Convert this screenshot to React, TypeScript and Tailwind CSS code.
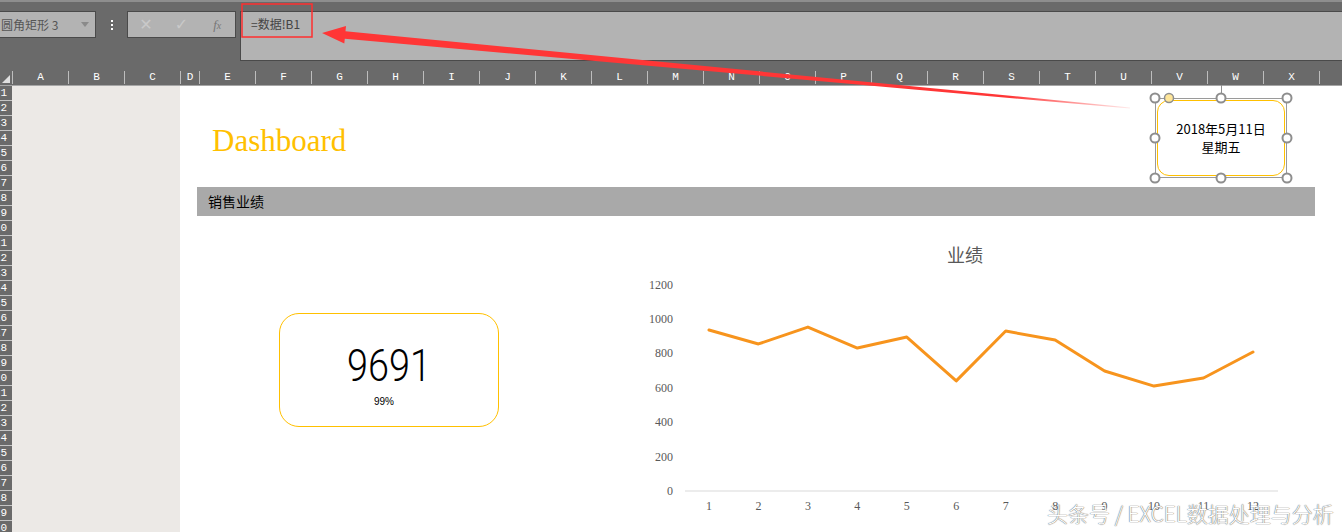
import React from 'react'

const cols: { l: string; w: number }[] = [
  { l: 'A', w: 56 },
  { l: 'B', w: 56 },
  { l: 'C', w: 56 },
  { l: 'D', w: 19 },
  ...'EFGHIJKLMNOPQRSTUVWXY'.split('').map((l) => ({ l, w: 56 })),
]

const sales = [936, 855, 953, 831, 895, 640, 930, 878, 698, 610, 657, 808]

function Toolbar() {
  return (
    <div className="h-[70px] bg-[#6a6a6a] border-t-2 border-[#8e8e8e] flex items-start pt-[9px] shrink-0">
      <div className="w-[96px] h-[27px] bg-[#b3b3b3] border border-[#4a4a4a] border-l-0 flex items-center justify-between pl-[1px] pr-[6px]">
        <span className="text-[12px] text-[#555] font-['Noto_Sans_CJK_SC',sans-serif]">圆角矩形 3</span>
        <span className="w-0 h-0 border-l-[4px] border-r-[4px] border-t-[5px] border-l-transparent border-r-transparent border-t-[#8a8a8a]" />
      </div>
      <div className="w-[31px] h-[27px] flex flex-col items-center justify-center gap-[2px]">
        <span className="w-[2px] h-[2px] bg-white" />
        <span className="w-[2px] h-[2px] bg-white" />
        <span className="w-[2px] h-[2px] bg-white" />
      </div>
      <div className="w-[109px] h-[27px] bg-[#b3b3b3] border border-[#4a4a4a] flex items-center">
        <span className="w-[36px] text-center text-[16px] text-[#c9c9c9] font-['DejaVu_Sans',sans-serif]">✕</span>
        <span className="w-[36px] text-center text-[16px] text-[#c9c9c9] font-['DejaVu_Sans',sans-serif]">✓</span>
        <span className="w-[36px] text-center text-[13px] italic text-[#777] font-['Liberation_Serif',serif]">
          f<span className="text-[10px]">x</span>
        </span>
      </div>
      <div className="ml-[4px] flex-1 h-[50px] bg-[#b3b3b3] border border-[#4a4a4a] border-r-0 pl-[10px] pt-[3px] text-[12px] leading-[18px] text-[#444] font-['Noto_Sans_CJK_SC',sans-serif]">
        =数据!B1
      </div>
    </div>
  )
}

function ColumnHeader() {
  return (
    <div className="h-[16px] bg-[#6a6a6a] flex border-b border-[#a6a6a6] shrink-0">
      <div className="w-[12px] shrink-0 relative">
        <span className="absolute left-[2px] bottom-[2px] w-0 h-0 border-b-[8px] border-l-[8px] border-b-[#e0e0e0] border-l-transparent" />
      </div>
      {cols.map((c) => (
        <div
          key={c.l}
          style={{ width: c.w }}
          className="shrink-0 flex items-end justify-center pb-[1px] border-l border-[#bdbdbd] my-[1px] text-[11px] leading-none text-white font-['Liberation_Mono',monospace]"
        >
          {c.l}
        </div>
      ))}
    </div>
  )
}

function RowHeader() {
  return (
    <div className="w-[12px] shrink-0 bg-[#6a6a6a] flex flex-col overflow-hidden">
      {Array.from({ length: 31 }, (_, i) => (
        <div
          key={i}
          className="h-[15px] shrink-0 border-b border-[#c4c4c4] flex items-center justify-end overflow-hidden pr-[5px] text-[11px] leading-none text-white font-['Liberation_Mono',monospace]"
        >
          <span className="whitespace-nowrap">{i + 1}</span>
        </div>
      ))}
    </div>
  )
}

function KpiCard() {
  return (
    <div className="ml-[99px] mt-[97px] w-[220px] h-[114px] border border-[#ffc000] rounded-[20px] flex flex-col items-center pt-[32px] shrink-0">
      <div className="text-[45px] leading-[40px] text-black font-['Roboto',sans-serif] font-light scale-x-[0.84]">
        9691
      </div>
      <div className="mt-[11px] ml-[-10px] text-[10px] leading-none text-black font-['Liberation_Sans',sans-serif]">99%</div>
    </div>
  )
}

function SalesChart() {
  const y = (v: number) => 255 - v * 0.172
  const x = (i: number) => 79 + i * 49.45
  const pts = sales.map((v, i) => `${x(i)},${y(v)}`).join(' ')
  return (
    <svg width="660" height="296" className="ml-[131px] mt-[20px] shrink-0 overflow-visible">
      <text x="335" y="26" textAnchor="middle" fontSize="18" fill="#595959" fontFamily="'Noto Sans CJK SC', sans-serif">
        业绩
      </text>
      {[0, 200, 400, 600, 800, 1000, 1200].map((v) => (
        <text key={v} x="43" y={y(v) + 4} textAnchor="end" fontSize="12" fill="#595959" fontFamily="'Liberation Serif', serif">
          {v}
        </text>
      ))}
      <line x1="55" y1="255" x2="648" y2="255" stroke="#d9d9d9" strokeWidth="1" />
      {sales.map((_, i) => (
        <text key={i} x={x(i)} y="274" textAnchor="middle" fontSize="12" fill="#595959" fontFamily="'Liberation Serif', serif">
          {i + 1}
        </text>
      ))}
      <polyline points={pts} fill="none" stroke="#f7941d" strokeWidth="3" strokeLinejoin="round" strokeLinecap="round" />
    </svg>
  )
}

function DateShape() {
  const handles = [
    [0, 0],
    [66, 0],
    [132, 0],
    [0, 40],
    [132, 40],
    [0, 80],
    [66, 80],
    [132, 80],
  ]
  return (
    <div className="absolute left-[1155px] top-[85px] w-[132px] h-[93px]">
      <div className="absolute left-[66px] top-0 w-px h-[13px] bg-[#8e8e8e]" />
      <div className="absolute left-0 top-[13px] w-[132px] h-[80px] border border-[#9a9a9a]">
        <div className="absolute inset-[1px] rounded-[12px] border border-[#ffc000] bg-white flex flex-col items-center justify-center text-[13px] leading-[18px] text-black font-['Noto_Sans_CJK_SC',sans-serif]">
          <span>2018年5月11日</span>
          <span>星期五</span>
        </div>
      </div>
      <svg className="absolute left-[-6px] top-[7px] overflow-visible" width="144" height="92">
        {handles.map(([hx, hy], i) => (
          <circle key={i} cx={hx + 6} cy={hy + 6} r="4.5" fill="white" stroke="#8e8e8e" strokeWidth="2" />
        ))}
        <circle cx="20" cy="6" r="4.5" fill="#ffe699" stroke="#8e8e8e" strokeWidth="1.5" />
      </svg>
    </div>
  )
}

function Arrow() {
  return (
    <svg className="absolute left-0 top-0 pointer-events-none" width="1342" height="532">
      <defs>
        <linearGradient id="arrowFade" gradientUnits="userSpaceOnUse" x1="322" y1="33" x2="1130" y2="108">
          <stop offset="0" stopColor="#ff3636" />
          <stop offset="0.85" stopColor="#ff3636" />
          <stop offset="1" stopColor="#ff3636" stopOpacity="0.1" />
        </linearGradient>
      </defs>
      <rect x="242" y="4" width="70" height="33" fill="none" stroke="#ff2f2f" strokeWidth="1.5" />
      <polygon
        points="322,33 346,26 345.5,31.2 1130,107.4 1130,108.6 344.8,38.8 344.3,43.5"
        fill="url(#arrowFade)"
      />
    </svg>
  )
}

export default function App() {
  return (
    <div className="relative w-[1342px] h-[532px] overflow-hidden bg-white flex flex-col">
      <Toolbar />
      <ColumnHeader />
      <div className="flex flex-1 min-h-0">
        <RowHeader />
        <div className="w-[168px] shrink-0 bg-[#ece9e6]" />
        <div className="flex-1 flex flex-col bg-white">
          <div className="h-[101px] shrink-0 pl-[32px] pt-[39px]">
            <span className="text-[31px] leading-none text-[#ffc000] font-['Liberation_Serif',serif]">Dashboard</span>
          </div>
          <div className="ml-[17px] w-[1118px] h-[29px] shrink-0 bg-[#a9a9a9] flex items-center pl-[11px] text-[14px] text-black font-['Noto_Sans_CJK_SC',sans-serif]">
            销售业绩
          </div>
          <div className="flex items-start">
            <KpiCard />
            <SalesChart />
          </div>
        </div>
      </div>
      <DateShape />
      <Arrow />
      <div className="absolute left-[1047px] top-[500px] text-[21px] leading-[26px] text-white font-['Noto_Sans_CJK_SC',sans-serif] font-light [text-shadow:0_0_1px_#666,0_0_1px_#666]">
        头条号 / EXCEL数据处理与分析
      </div>
    </div>
  )
}
